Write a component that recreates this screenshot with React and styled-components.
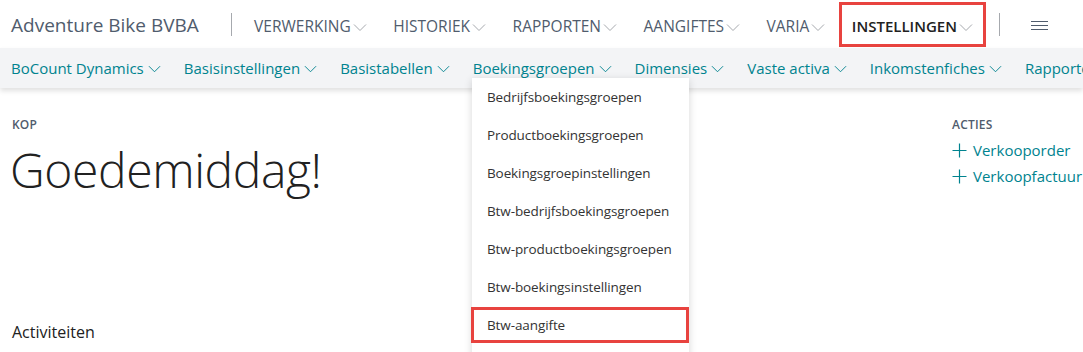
import React from 'react';
import styled, { createGlobalStyle } from 'styled-components';

const GlobalStyle = createGlobalStyle`
  html, body {
    margin: 0;
    padding: 0;
    background: #ffffff;
  }
  body {
    font-family: "Open Sans", "Noto Sans", sans-serif;
    width: 1083px;
    height: 352px;
    overflow: hidden;
  }
`;

const Page = styled.div`
  position: relative;
  width: 1083px;
  height: 352px;
  overflow: hidden;
`;

const TopBar = styled.div`
  display: flex;
  align-items: center;
  height: 48px;
  padding-left: 11px;
  background: #ffffff;
`;

const Company = styled.div`
  font-size: 19px;
  color: #505c6d;
  white-space: nowrap;
  margin-right: 32px;
  margin-top: 2px;
`;

const Divider = styled.div`
  width: 1px;
  height: 23px;
  background: #a6a9ae;
  margin: ${(p) => p.$margin || '0'};
`;

const TopItem = styled.div`
  display: flex;
  align-items: center;
  box-sizing: border-box;
  height: 45px;
  padding: 3px 10.25px 0 10.25px;
  margin-top: 1px;
  font-size: ${(p) => (p.$active ? '15px' : '15.5px')};
  color: ${(p) => (p.$active ? '#212121' : '#505c6d')};
  font-weight: ${(p) => (p.$active ? 600 : 400)};
  border: 3px solid ${(p) => (p.$active ? '#e8433f' : 'transparent')};
  white-space: nowrap;
`;

const Chevron = ({ color = '#a6a9ae', size = 14, gap = 2 }) => (
  <svg width={size} height={size} viewBox="0 0 14 14" style={{ marginLeft: gap, marginTop: 1 }}>
    <path d="M1 4.5 L7 10.5 L13 4.5" fill="none" stroke={color} strokeWidth="1" />
  </svg>
);

const Hamburger = styled.div`
  display: flex;
  flex-direction: column;
  gap: 3px;
  margin-left: 31px;
  margin-top: 2px;
  span {
    display: block;
    width: 17px;
    height: 1px;
    background: #505c6d;
  }
`;

const SubBar = styled.div`
  display: flex;
  align-items: center;
  height: 40px;
  padding-left: 11px;
  gap: 23px;
  background: #f3f4f6;
  box-shadow: 0 3px 5px rgba(0, 0, 0, 0.12);
  position: relative;
  z-index: 1;
`;

const SubItem = styled.div`
  display: flex;
  align-items: center;
  font-size: 15px;
  color: #00838f;
  white-space: nowrap;
`;

const Dropdown = styled.div`
  position: absolute;
  left: 472px;
  top: 78px;
  width: 217px;
  height: 300px;
  background: #ffffff;
  box-shadow: 0 2px 8px rgba(0, 0, 0, 0.16);
  z-index: 2;
  padding-top: 1px;
`;

const DropItem = styled.div`
  display: flex;
  align-items: center;
  box-sizing: border-box;
  height: 36px;
  margin: 0 0 2px -1px;
  padding-left: 13px;
  font-size: 13.5px;
  color: #333333;
  letter-spacing: -0.1px;
  white-space: nowrap;
  border: 3px solid ${(p) => (p.$active ? '#e8433f' : 'transparent')};
`;

const Content = styled.div`
  display: flex;
  justify-content: space-between;
  padding: 28px 0 0 12px;
`;

const Left = styled.div`
  display: flex;
  flex-direction: column;
`;

const Caption = styled.div`
  font-size: 12px;
  font-weight: 600;
  color: #505c6d;
  text-transform: uppercase;
  letter-spacing: 0.2px;
`;

const Greeting = styled.h1`
  margin: 4px 0 0 -2px;
  font-size: 48px;
  font-weight: 300;
  color: #212121;
  letter-spacing: -0.4px;
  line-height: 66px;
`;

const Section = styled.div`
  margin-top: 118px;
  font-size: 16px;
  color: #212121;
`;

const Right = styled.div`
  width: 131px;
  display: flex;
  flex-direction: column;
`;

const Action = styled.div`
  display: flex;
  align-items: center;
  gap: 6px;
  margin-top: ${(p) => (p.$first ? '7px' : '6px')};
  font-size: 15px;
  color: #00838f;
  white-space: nowrap;
`;

const Plus = () => (
  <svg width="15" height="15" viewBox="0 0 15 15">
    <path d="M7.5 0.5 V14.5 M0.5 7.5 H14.5" stroke="#00838f" strokeWidth="1.2" fill="none" />
  </svg>
);

const topItems = ['VERWERKING', 'HISTORIEK', 'RAPPORTEN', 'AANGIFTES', 'VARIA'];
const subItems = [
  'BoCount Dynamics',
  'Basisinstellingen',
  'Basistabellen',
  'Boekingsgroepen',
  'Dimensies',
  'Vaste activa',
  'Inkomstenfiches',
  'Rapporten',
];
const dropItems = [
  'Bedrijfsboekingsgroepen',
  'Productboekingsgroepen',
  'Boekingsgroepinstellingen',
  'Btw-bedrijfsboekingsgroepen',
  'Btw-productboekingsgroepen',
  'Btw-boekingsinstellingen',
  'Btw-aangifte',
];

const App = () => {
  return (
    <Page>
      <GlobalStyle />
      <TopBar>
        <Company>Adventure Bike BVBA</Company>
        <Divider $margin="0 9px 0 0" />
        {topItems.map((t) => (
          <TopItem key={t}>
            {t}
            <Chevron />
          </TopItem>
        ))}
        <TopItem $active>
          INSTELLINGEN
          <Chevron />
        </TopItem>
        <Divider $margin="0 0 0 13px" />
        <Hamburger>
          <span />
          <span />
          <span />
        </Hamburger>
      </TopBar>
      <SubBar>
        {subItems.map((t) => (
          <SubItem key={t}>
            {t}
            <Chevron color="#00838f" size={13} gap={4} />
          </SubItem>
        ))}
      </SubBar>
      <Dropdown>
        {dropItems.map((t) => (
          <DropItem key={t} $active={t === 'Btw-aangifte'}>
            {t}
          </DropItem>
        ))}
      </Dropdown>
      <Content>
        <Left>
          <Caption>Kop</Caption>
          <Greeting>Goedemiddag!</Greeting>
          <Section>Activiteiten</Section>
        </Left>
        <Right>
          <Caption>Acties</Caption>
          <Action $first>
            <Plus />
            Verkooporder
          </Action>
          <Action>
            <Plus />
            Verkoopfactuur
          </Action>
        </Right>
      </Content>
    </Page>
  );
};

export default App;
